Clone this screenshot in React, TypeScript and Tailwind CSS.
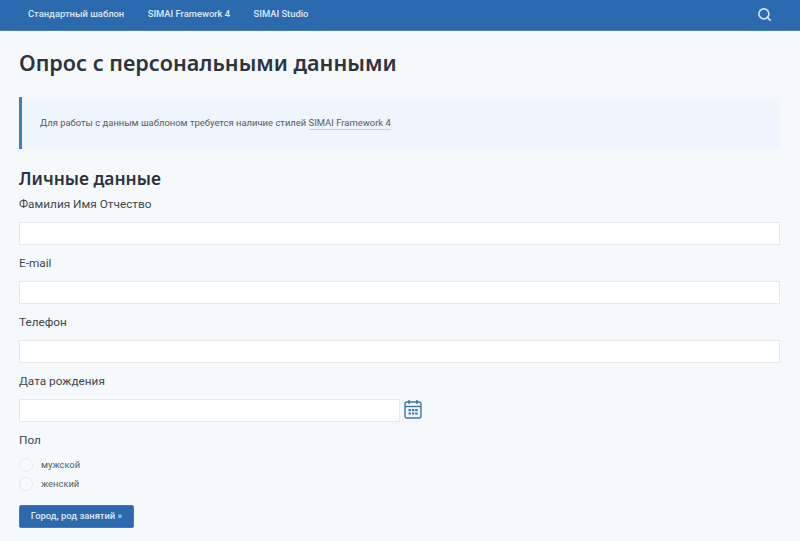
import { Search } from "lucide-react";

const fields = ["Фамилия Имя Отчество", "E-mail", "Телефон"];
const navItems = ["Стандартный шаблон", "SIMAI Framework 4", "SIMAI Studio"];

function Calendar() {
  return (
    <svg width="18" height="20" viewBox="0 0 18 20" fill="none" className="mb-[3px] text-[#3f74a8]">
      <rect x="1" y="3" width="16" height="16" rx="2" stroke="currentColor" strokeWidth="1.4" />
      <path d="M1 7.5h16" stroke="currentColor" strokeWidth="1.4" />
      <path d="M5 1v4M13 1v4" stroke="currentColor" strokeWidth="1.4" />
      <path d="M4.5 10h2.4v2.2H4.5zM7.9 10h2.4v2.2H7.9zM11.2 10h2.4v2.2h-2.4zM4.5 13.4h2.4v2.2H4.5zM7.9 13.4h2.4v2.2H7.9zM11.2 13.4h2.4v2.2h-2.4z" fill="currentColor" />
    </svg>
  );
}

function Radio({ label }: { label: string }) {
  return (
    <label className="flex h-[14px] items-center gap-2 text-[9.4px] text-[#565b63]">
      <span className="h-[14px] w-[14px] rounded-full border border-[#e6eaee] bg-[#f6fafd]" />
      {label}
    </label>
  );
}

export default function App() {
  return (
    <div className="min-h-[541px] overflow-hidden bg-[#f5f9fc] font-['Roboto',sans-serif] text-[#41464d]">
      <nav className="flex h-[31px] items-center justify-between border-b border-[#4d7ea8] bg-[#2b6aae] px-[28px] pb-[2px] text-[9.4px] font-medium text-[#dfe9f4]">
        <div className="flex gap-[23.5px]">
          {navItems.map((item) => (
            <a key={item}>{item}</a>
          ))}
        </div>
        <Search size={15} strokeWidth={2.6} className="text-[#d5e4f3]" />
      </nav>

      <main className="pl-[19px] pr-[20px]">
        <h1 className="mt-[17px] font-['Noto_Sans',sans-serif] text-[21.6px] font-semibold leading-[30px] text-[#2f333b]">
          Опрос с персональными данными
        </h1>

        <div className="mt-[19px] flex h-[52px] items-center border-l-[3px] border-[#3f7fb8] bg-[#eef5fc] pl-[18px] text-[9.45px] text-[#565b63]">
          <p>
            Для работы с данным шаблоном требуется наличие стилей{" "}
            <a className="border-b border-[#c5d0da] pb-px">SIMAI Framework 4</a>
          </p>
        </div>

        <h2 className="mt-[17px] mb-[3px] font-['Noto_Sans',sans-serif] text-[17.4px] font-semibold leading-[25px] text-[#2f333b]">
          Личные данные
        </h2>

        <div className="flex flex-col">
          {fields.map((field) => (
            <div key={field} className="mb-[8px]">
              <div className="mb-[8px] text-[11.8px] leading-[20px]">{field}</div>
              <input className="block h-[23px] w-full border border-[#e6e9ec] bg-white" />
            </div>
          ))}
          <div className="mb-[8px]">
            <div className="mb-[8px] text-[11.8px] leading-[20px]">Дата рождения</div>
            <div className="flex items-center gap-[4px]">
              <input className="block h-[23px] w-[381px] border border-[#e6e9ec] bg-white" />
              <Calendar />
            </div>
          </div>
        </div>

        <div className="text-[11.8px] leading-[20px]">Пол</div>
        <div className="mt-[8px] flex flex-col gap-[5px]">
          <Radio label="мужской" />
          <Radio label="женский" />
        </div>

        <button className="mt-[14px] h-[23px] w-[115px] rounded-[2px] border border-[#3f7fb8] bg-[#2b6aae] text-[9.4px] font-medium text-[#dfe9f4]">
          Город, род занятий »
        </button>
      </main>
    </div>
  );
}
